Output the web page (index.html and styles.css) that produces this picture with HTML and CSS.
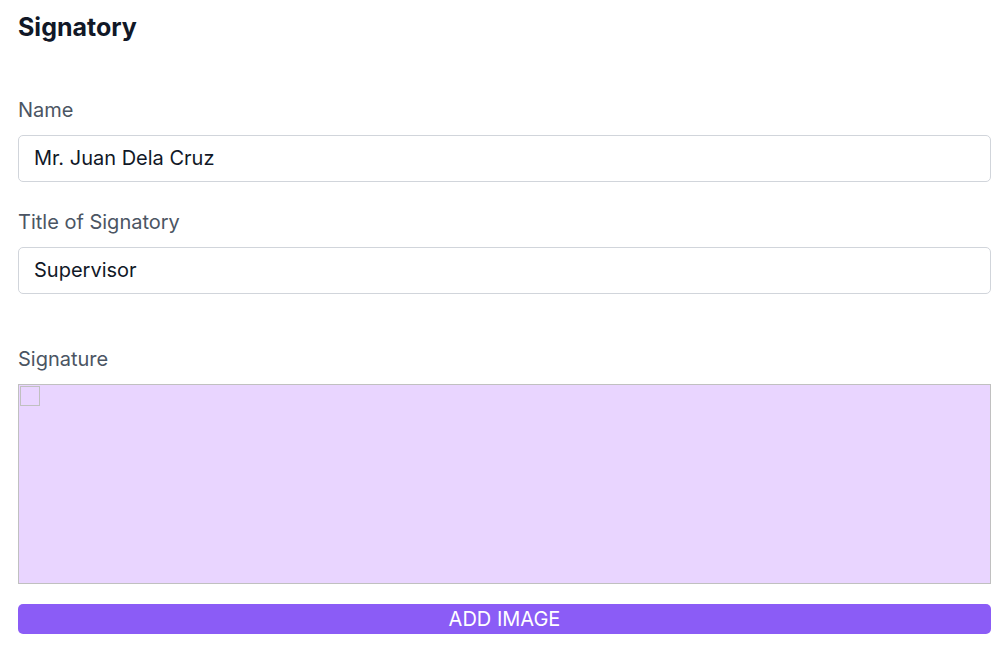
FILE: index.html
```
<!DOCTYPE html>
<html lang="en">
<head>
    <meta charset="UTF-8">
    <meta name="viewport" content="width=device-width, initial-scale=1.0">
    <title>Signatory</title>
    <link rel="stylesheet" href="styles.css">
</head>
<body>
    <form class="signatory">
        <h1 class="title">Signatory</h1>

        <div class="field">
            <label for="name">Name</label>
            <input type="text" id="name" name="name" value="Mr. Juan Dela Cruz">
        </div>
        <div class="field">
            <label for="position">Title of Signatory</label>
            <input type="text" id="position" name="position" value="Supervisor">
        </div>

        <div class="field signature">
            <span class="label">Signature</span>
            <div class="preview">
                <div class="placeholder"></div>
            </div>
        </div>

        <button class="add-button" type="button">ADD IMAGE</button>
    </form>
</body>
</html>
```

FILE: styles.css
```
* {
    box-sizing: border-box;
}

body {
    margin: 0;
    background-color: #fff;
    color: #111827;
    font-family: Inter, "Liberation Sans", sans-serif;
    font-size: 20px;
    line-height: 30px;
}

.signatory {
    padding: 12px 16px 20px 18px;
}

.title {
    margin: 0 0 53px;
    font-size: 25px;
    font-weight: 700;
    line-height: 30px;
}

.field {
    margin-bottom: 25px;
}

.field label,
.label {
    display: block;
    margin-bottom: 10px;
    color: #4b5563;
}

.field input {
    display: block;
    width: 100%;
    padding: 7px 15px 8px;
    border: 1px solid #d1d5db;
    border-radius: 5px;
    background-color: #fff;
    color: #111827;
    font: inherit;
}

/* Signature preview */
.signature {
    margin-top: 50px;
    margin-bottom: 20px;
}

.preview {
    height: 200px;
    padding: 1px;
    border: 1px solid #c0c0c0;
    background-color: #e9d5ff;
}

.placeholder {
    width: 20px;
    height: 20px;
    border: 1px solid #c0c0c0;
}

.add-button {
    display: block;
    width: 100%;
    height: 30px;
    padding: 0;
    border: none;
    border-radius: 5px;
    background-color: #8b5cf6;
    color: #fff;
    font: inherit;
    cursor: pointer;
}
```
